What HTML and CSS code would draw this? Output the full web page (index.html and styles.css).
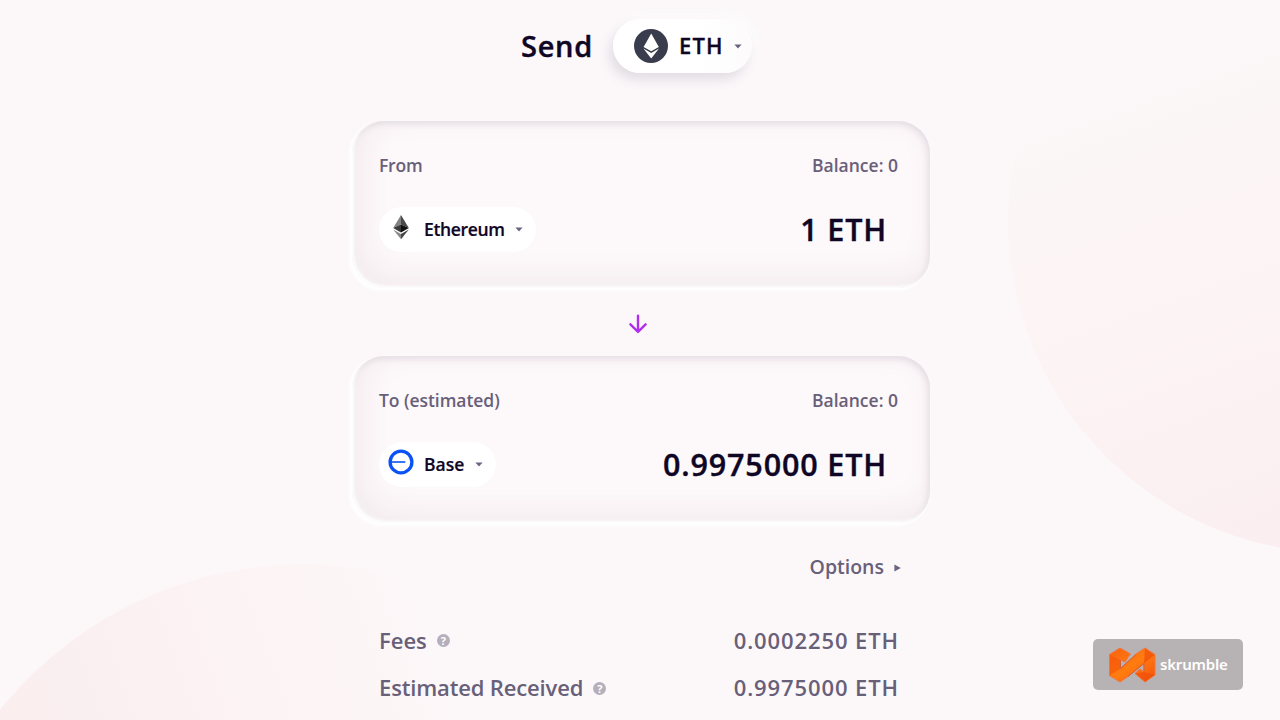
FILE: index.html
```
<!DOCTYPE html>
<html lang="en">
<head>
    <meta charset="UTF-8">
    <meta name="viewport" content="width=device-width, initial-scale=1.0">
    <title>Send</title>
    <link rel="stylesheet" href="styles.css">
</head>
<body>
    <!-- background circles -->
    <div class="background">
        <div class="circle circle-right"></div>
        <div class="circle circle-left"></div>
    </div>

    <div class="container">
        <div class="header">
            <h1>Send</h1>
            <div class="token-select">
                <svg class="token-icon" viewBox="0 0 34 34">
                    <circle cx="17" cy="17" r="17" fill="#393c4c"/>
                    <path d="M17.2 4.5 9.6 18l7.6 4.3 7.6-4.3z" fill="#fff"/>
                    <path d="M9.4 19.6l7.8 4.4 7.8-4.4-7.8 10z" fill="#fff"/>
                </svg>
                <span class="token-name">ETH</span>
                <svg class="caret" viewBox="0 0 8 5"><path d="M.4.5h7.2L4 4.6z"/></svg>
            </div>
        </div>

        <div class="card">
            <div class="card-row labels">
                <span class="label-from">From</span>
                <span class="balance">Balance: 0</span>
            </div>
            <div class="card-row">
                <div class="network-select">
                    <svg class="network-icon" viewBox="0 0 26 26">
                        <path d="M13 1 5.2 14 13 10.4z" fill="#828282"/>
                        <path d="M13 1v9.4l7.8 3.6z" fill="#4a4a4a"/>
                        <path d="M5.2 14 13 10.4v8.1z" fill="#393939"/>
                        <path d="M13 10.4 20.8 14 13 18.5z" fill="#111"/>
                        <path d="M5.2 15.6 13 20v5.2z" fill="#8a8a8a"/>
                        <path d="M20.8 15.6 13 20v5.2z" fill="#454545"/>
                    </svg>
                    <span class="network-name ethereum">Ethereum</span>
                    <svg class="caret" viewBox="0 0 8 5"><path d="M.4.5h7.2L4 4.6z"/></svg>
                </div>
                <span class="amount">1 ETH</span>
            </div>
        </div>

        <svg class="arrow" viewBox="0 0 20 20">
            <path d="M10 1.8v16M2.4 10.3l7.6 7.6 7.6-7.6"/>
        </svg>

        <div class="card">
            <div class="card-row labels">
                <span class="label-to">To (estimated)</span>
                <span class="balance">Balance: 0</span>
            </div>
            <div class="card-row">
                <div class="network-select">
                    <svg class="network-icon" viewBox="0 0 26 26">
                        <circle cx="13" cy="13" r="10.9" fill="none" stroke="#0a52f5" stroke-width="3.3"/>
                        <path d="M2 13h15.3" stroke="#0a52f5" stroke-width="1.6"/>
                    </svg>
                    <span class="network-name base">Base</span>
                    <svg class="caret" viewBox="0 0 8 5"><path d="M.4.5h7.2L4 4.6z"/></svg>
                </div>
                <span class="amount">0.9975000 ETH</span>
            </div>
        </div>

        <div class="options">
            <span>Options</span>
            <svg class="caret-right" viewBox="0 0 7 8"><path d="M.4.6v6.8L6.8 4z"/></svg>
        </div>

        <div class="details">
            <div class="detail-row">
                <span class="fees">Fees</span>
                <span class="help">?</span>
                <span class="detail-value">0.0002250 ETH</span>
            </div>
            <div class="detail-row">
                <span class="received">Estimated Received</span>
                <span class="help">?</span>
                <span class="detail-value">0.9975000 ETH</span>
            </div>
        </div>
    </div>

    <div class="watermark">
        <svg class="watermark-logo" viewBox="0 0 48 36">
            <defs>
                <linearGradient id="orange" x1="0" y1="0" x2="1" y2="1">
                    <stop offset="0" stop-color="#f8600f"/>
                    <stop offset=".5" stop-color="#ff7d10"/>
                    <stop offset="1" stop-color="#f5520c"/>
                </linearGradient>
            </defs>
            <path d="M12 1 1.500 7.500v21L12 35l8-5.500 16-13V25l-4-3-5 4.500 10 8.500 10-7V7.500L37 1l-9 6-15.500 14.500V13l4.500 2 3.500-5.500 2-2.500z" fill="url(#orange)" stroke="#f4743c" stroke-width="1" stroke-linejoin="round"/>
            <path d="M2 28V8l10.500 5v8.500z" fill="#f65a0c" opacity=".7"/>
            <path d="M37 1.500 46.500 8 36 16.500z" fill="#f04f0c" opacity=".7"/>
            <path d="M36 25l10.500 2.700L37 34.500l-9.500-8z" fill="#f04f0c" opacity=".7"/>
            <path d="M12.500 21.500V13.500M13 21 28 7.500M36 16.500V25M20 29.500l16-13" fill="none" stroke="#d55f35" stroke-width="1"/>
        </svg>
        <span>skrumble</span>
    </div>
</body>
</html>
```
FILE: styles.css
```
* {
    box-sizing: border-box;
}
body {
    margin: 0;
    height: 720px;
    position: relative;
    overflow: hidden;
    background-color: #fcf8fa;
    color: #0f0524;
    font-family: "Open Sans", "Noto Sans", sans-serif;
    font-weight: 600;
}
svg {
    display: block;
    flex: none;
}
span,
h1 {
    white-space: nowrap;
}
/* background */
.background {
    position: absolute;
    inset: 0;
    overflow: hidden;
}
.circle {
    position: absolute;
    border-radius: 50%;
}
.circle-right {
    left: 1008px;
    top: -111px;
    width: 664px;
    height: 664px;
    background: linear-gradient(160deg, #fcf8fa 20%, #fbf6f6 34%, #fdf4f5 48%, #fcf2f3 63%, #faeef0 84%, #fcebec);
}
.circle-left {
    left: -87px;
    top: 564px;
    width: 784px;
    height: 784px;
    background: linear-gradient(250deg, #fcf8fa 24%, #fcf5f6 36%, #fcf2f3 50%, #faeff0 64%, #fcecec 78%);
}
.container {
    position: relative;
    width: 578px;
    margin-left: 352px;
    padding-top: 19px;
}
/* header */
.header {
    display: flex;
    height: 54px;
    align-items: center;
    padding-left: 169px;
}
h1 {
    width: 92px;
    margin: 0;
    font-size: 29px;
    line-height: 40px;
    font-weight: 600;
    letter-spacing: 0.7px;
    -webkit-text-stroke: 0.4px #0f0524;
}
.token-select {
    display: flex;
    align-items: center;
    width: 139px;
    height: 54px;
    padding-left: 21px;
    border-radius: 27px;
    background: linear-gradient(to right, #fff 60%, #fdfbfc);
    box-shadow: -4px 7px 12px rgba(65, 50, 85, 0.13), 5px -6px 12px rgba(255, 255, 255, 0.5);
}
.token-icon {
    width: 34px;
    height: 34px;
}
.token-name {
    width: 55px;
    margin: -2px 0 0 11px;
    font-size: 22px;
    line-height: 30px;
    letter-spacing: 1.2px;
    -webkit-text-stroke: 0.3px #0f0524;
}
.caret {
    width: 8px;
    height: 5px;
    fill: #6b6480;
}
/* cards */
.card {
    height: 167px;
    margin-top: 48px;
    padding: 30px 32px 0 27px;
    border-radius: 32px;
    background-color: rgba(253, 248, 250, 0.8);
    box-shadow: -2px 2px 3px 1px #fff,
        inset 2px -2px 3px #fff,
        inset -2px 3px 6px rgba(65, 45, 75, 0.11),
        inset 8px -8px 35px rgba(80, 40, 65, 0.065);
}
.card-row {
    display: flex;
    align-items: center;
    justify-content: space-between;
}
.labels {
    height: 28px;
    margin-bottom: 28px;
    font-size: 17.5px;
    color: #686079;
}
.label-from {
    letter-spacing: -0.2px;
}
.label-to {
    letter-spacing: -0.05px;
}
.network-select {
    display: flex;
    align-items: center;
    height: 45px;
    padding: 0 13px 0 9px;
    border-radius: 23px;
    background-color: #fff;
}
.network-icon {
    width: 26px;
    height: 26px;
    margin: -5px 10px 0 0;
}
.network-name {
    margin-top: -2px;
    font-size: 17.5px;
    -webkit-text-stroke: 0.2px #0f0524;
}
.ethereum {
    width: 91px;
    letter-spacing: -0.35px;
}
.base {
    width: 51px;
}
.amount {
    margin: -2px 11px 0 0;
    font-size: 30.5px;
    line-height: 40px;
    letter-spacing: 0.85px;
    -webkit-text-stroke: 0.4px #0f0524;
}
.arrow {
    width: 20px;
    height: 20px;
    margin: 26px 0 22px 276px;
    fill: none;
    stroke: #b02fed;
    stroke-width: 2.4;
    stroke-linecap: round;
    stroke-linejoin: round;
}
.arrow + .card {
    margin-top: 0;
}
/* fees and options */
.options {
    display: flex;
    align-items: center;
    justify-content: flex-end;
    gap: 10px;
    height: 30px;
    margin-top: 28px;
    padding-right: 29px;
    font-size: 19.5px;
    color: #686079;
}
.caret-right {
    width: 7px;
    height: 8px;
    margin-top: 3px;
    fill: #6b6480;
}
.details {
    margin-top: 35px;
    padding: 0 32px 0 27px;
    font-size: 22px;
    color: #686079;
}
.detail-row {
    display: flex;
    align-items: center;
    height: 47.5px;
}
.received {
    letter-spacing: -0.15px;
}
.help {
    width: 13px;
    height: 13px;
    margin: 2px 0 0 10px;
    border-radius: 50%;
    background-color: #b5afbb;
    color: #fff;
    font-size: 11px;
    line-height: 13px;
    font-weight: 700;
    text-align: center;
}
.detail-value {
    margin-left: auto;
    margin-right: -1px;
    letter-spacing: 0.9px;
}
/* watermark */
.watermark {
    position: absolute;
    left: 1093px;
    top: 639px;
    display: flex;
    align-items: center;
    width: 150px;
    height: 51px;
    padding-left: 15px;
    border-radius: 5px;
    background-color: #b7b2b3;
    color: #fff;
    font-family: "Noto Sans", sans-serif;
    font-size: 15px;
    letter-spacing: -0.2px;
}
.watermark span {
    margin-top: -2px;
}
.watermark-logo {
    width: 48px;
    height: 36px;
    margin-right: 4px;
}
```
